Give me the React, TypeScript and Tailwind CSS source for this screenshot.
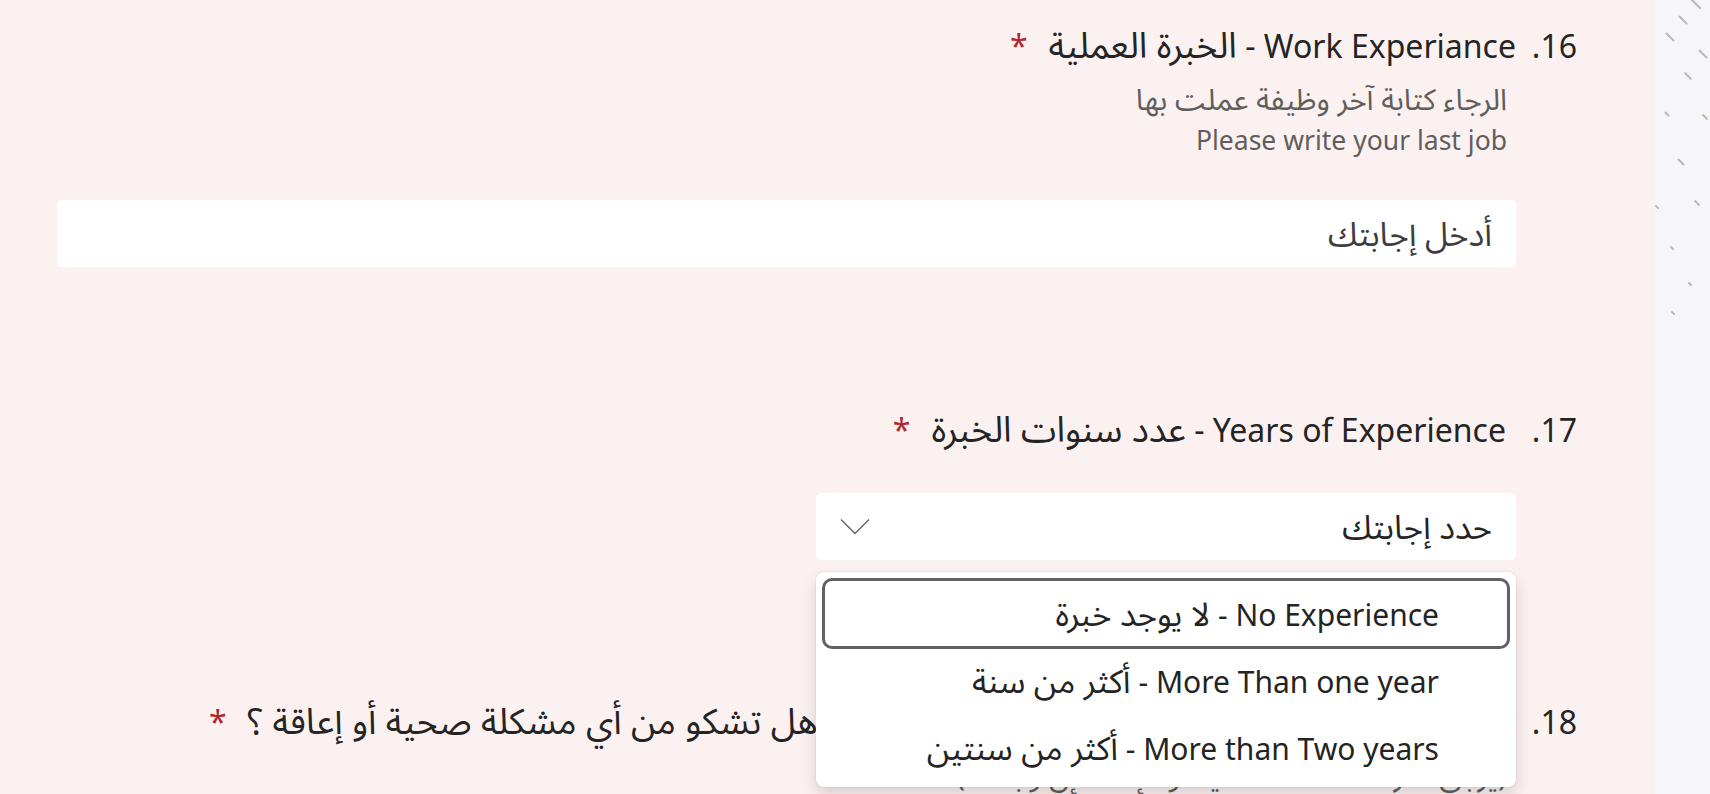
import React from "react";

const FONT = '"Noto Sans", "Noto Sans Arabic", "DejaVu Sans", sans-serif';

function Chevron() {
  return (
    <svg width="30" height="17" viewBox="0 0 30 17" fill="none">
      <polyline points="1,1.5 15,15.5 29,1.5" stroke="#616161" strokeWidth="1.4" fill="none" />
    </svg>
  );
}

function Dashes() {
  const marks: [number, number, number][] = [
    [41, 4, 8],
    [28, 20, 7],
    [15, 37, 7],
    [48, 54, 7],
    [33, 76, 6],
    [12, 114, 3],
    [50, 117, 4],
    [26, 162, 5],
    [42, 203, 4],
    [2, 207, 2],
    [17, 248, 2],
    [35, 284, 2],
    [18, 313, 2],
  ];
  return (
    <svg width="55" height="340" viewBox="0 0 55 340">
      {marks.map(([x, y, l], i) => (
        <line
          key={i}
          x1={x - l / 2}
          y1={y - l / 2}
          x2={x + l / 2}
          y2={y + l / 2}
          stroke="#b9b9bd"
          strokeWidth="2"
          strokeLinecap="round"
        />
      ))}
    </svg>
  );
}

function Ar({ children }: { children: React.ReactNode }) {
  return <span className="text-[1.1em] leading-none">{children}</span>;
}

function ArT({ children }: { children: React.ReactNode }) {
  return <span className="text-[1.12em] leading-none">{children}</span>;
}

function Asterisk() {
  return <span className="mr-[21px] text-[#b3262e]">*</span>;
}

export default function App() {
  return (
    <div
      dir="rtl"
      className="flex h-[794px] w-full overflow-hidden bg-[#fcf1f1]"
      style={{ fontFamily: FONT }}
    >
      {/* decorative strip */}
      <div className="w-[55px] shrink-0 bg-[#f6f6f8]">
        <Dashes />
      </div>

      {/* main form */}
      <div className="flex flex-1 flex-col pl-[57px] pr-[78px]">
        {/* Q16 */}
        <div className="mt-[24px] flex">
          <div className="w-[61px] shrink-0 text-[32px] leading-[44px] text-[#242424]">16.</div>
          <div className="flex flex-1 flex-col">
            <div className="h-[44px] text-[32px] leading-[44px] text-[#242424]">
              Work Experiance - <ArT>الخبرة العملية</ArT>
              <Asterisk />
            </div>
            <div className="mt-[12px] pr-[9px] text-[26.5px] leading-[40px] text-[#605e5c]">
              <div className="h-[40px]">
                <ArT>الرجاء كتابة آخر وظيفة عملت بها</ArT>
              </div>
              <div className="h-[40px]">Please write your last job</div>
            </div>
            <div className="mt-[40px] flex h-[67px] items-center rounded-[4px] bg-white pr-[24px] text-[30px] text-[#3d3d3d]">
              <Ar>أدخل إجابتك</Ar>
            </div>
          </div>
        </div>

        {/* Q17 */}
        <div className="mt-[141px] flex">
          <div className="w-[61px] shrink-0 text-[32px] leading-[44px] text-[#242424]">17.</div>
          <div className="flex flex-1 flex-col">
            <div className="h-[44px] pr-[10px] text-[32px] leading-[44px] text-[#242424]">
              Years of Experience - <ArT>عدد سنوات الخبرة</ArT>
              <Asterisk />
            </div>
            <div className="relative z-10 mt-[41px] w-[700px]">
              <div className="flex h-[67px] items-center justify-between rounded-[6px] bg-white pl-[24px] pr-[24px] text-[30px] text-[#242424]">
                <Ar>حدد إجابتك</Ar>
                <Chevron />
              </div>
              <div className="absolute right-0 top-[79px] w-[700px] rounded-[8px] bg-white px-[6px] pb-[5px] pt-[9px] shadow-[0_0_2px_rgba(0,0,0,0.12),0_8px_16px_rgba(0,0,0,0.14)]">
                <div className="relative flex h-[67px] items-center pr-[71px] text-[30px] leading-[40px] text-[#242424]">
                  <div className="pointer-events-none absolute inset-x-0 -bottom-[1px] -top-[3px] rounded-[10px] border-[3px] border-[#616161]" />
                  <span>
                    No Experience - <Ar>لا يوجد خبرة</Ar>
                  </span>
                </div>
                <div className="flex h-[67px] items-center pr-[71px] text-[30px] leading-[40px] text-[#242424]">
                  <span>
                    More Than one year - <Ar>أكثر من سنة</Ar>
                  </span>
                </div>
                <div className="flex h-[67px] items-center pr-[71px] text-[30px] leading-[40px] text-[#242424]">
                  <span>
                    More than Two years - <Ar>أكثر من سنتين</Ar>
                  </span>
                </div>
              </div>
            </div>
          </div>
        </div>

        {/* Q18 */}
        <div className="mt-[140px] flex">
          <div className="w-[61px] shrink-0 text-[32px] leading-[44px] text-[#242424]">18.</div>
          <div className="flex flex-1 flex-col">
            <div className="h-[44px] whitespace-nowrap text-[32px] leading-[44px] text-[#242424]">
              Do you have any health problem or disability - <ArT>هل تشكو من أي مشكلة صحية أو إعاقة ؟</ArT>
              <Asterisk />
            </div>
            <div className="mt-[12px] pr-[9px] text-[26.5px] leading-[40px] text-[#605e5c]">
              <div className="h-[40px]">
                <ArT>(يرجى ذكر المشكلة الصحية أو الإعاقة إن وجدت)</ArT>
              </div>
              <div className="h-[40px]">Please mention the health problem if any</div>
            </div>
          </div>
        </div>
      </div>
    </div>
  );
}
